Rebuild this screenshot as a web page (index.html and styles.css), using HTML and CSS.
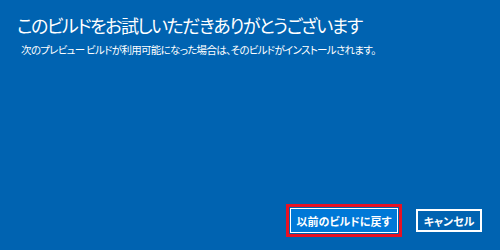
FILE: index.html
```html
<!DOCTYPE html>
<html lang="ja">
<head>
<meta charset="utf-8">
<link rel="stylesheet" href="styles.css">
</head>
<body>
<div class="dialog">
  <h1 class="title">このビルドをお試しいただきありがとうございます</h1>
  <p class="desc">次のプレビュー ビルドが利用可能になった場合は、そのビルドがインストールされます。</p>
  <div class="actions">
    <div class="focus-ring"><button class="btn btn-primary">以前のビルドに戻す</button></div>
    <button class="btn btn-secondary">キャンセル</button>
  </div>
</div>
</body>
</html>
```
FILE: styles.css
```css
html, body {
  margin: 0;
  padding: 0;
}
body {
  width: 500px;
  height: 250px;
  overflow: hidden;
  font-family: "Noto Sans CJK JP", "Noto Sans", sans-serif;
  font-feature-settings: "palt";
}
.dialog {
  box-sizing: border-box;
  width: 500px;
  height: 250px;
  background: #0063b1;
  color: #ffffff;
  display: flex;
  flex-direction: column;
  padding: 12px 18px 13px 17px;
}
.title {
  margin: 0;
  font-size: 18px;
  font-weight: 400;
  line-height: 26px;
  letter-spacing: -1.5px;
}
.desc {
  margin: 4px 0 0 4px;
  font-size: 10.5px;
  line-height: 16px;
  letter-spacing: -0.7px;
}
.actions {
  margin-top: auto;
  display: flex;
  justify-content: flex-end;
  align-items: center;
  gap: 14px;
}
.focus-ring {
  border: 3px solid #e81123;
  padding: 1px;
  display: flex;
}
.btn {
  font-family: inherit;
  font-feature-settings: "palt";
  font-size: 11px;
  font-weight: 700;
  color: #ffffff;
  margin: 0;
  cursor: pointer;
  line-height: 14px;
}
.btn-primary {
  background: #0078d7;
  border: 1px solid #ffffff;
  height: 25px;
  width: 108px;
  padding: 0;
}
.btn-secondary {
  background: #0063b1;
  border: 2px solid #ffffff;
  height: 23px;
  width: 66px;
  padding: 0;
}
```
